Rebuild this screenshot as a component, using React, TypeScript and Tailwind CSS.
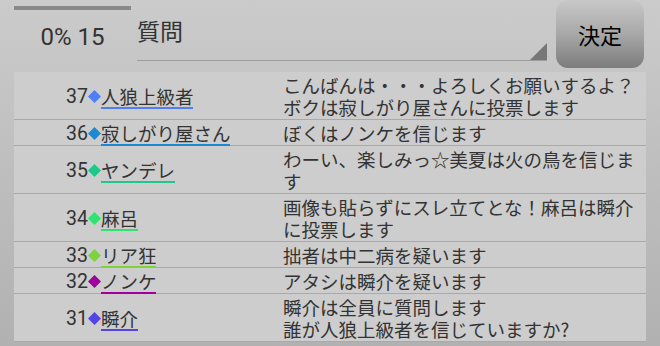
import React from "react";

type Row = { n: number; name: string; color: string; lines: string[] };

const rows: Row[] = [
  { n: 37, name: "人狼上級者", color: "#4f7ff2", lines: ["こんばんは・・・よろしくお願いするよ？", "ボクは寂しがり屋さんに投票します"] },
  { n: 36, name: "寂しがり屋さん", color: "#1a8ad4", lines: ["ぼくはノンケを信じます"] },
  { n: 35, name: "ヤンデレ", color: "#1ec88a", lines: ["わーい、楽しみっ☆美夏は火の鳥を信じま", "す"] },
  { n: 34, name: "麻呂", color: "#30e272", lines: ["画像も貼らずにスレ立てとな！麻呂は瞬介", "に投票します"] },
  { n: 33, name: "リア狂", color: "#7cd43a", lines: ["拙者は中二病を疑います"] },
  { n: 32, name: "ノンケ", color: "#a0009c", lines: ["アタシは瞬介を疑います"] },
  { n: 31, name: "瞬介", color: "#5544e4", lines: ["瞬介は全員に質問します", "誰が人狼上級者を信じていますか?"] },
];

const cjk = { fontFamily: '"Noto Sans CJK JP", sans-serif' };
const latin = { fontFamily: 'Roboto, "Noto Sans CJK JP", sans-serif' };

export default function App() {
  return (
    <div
      className="w-[660px] h-[346px] overflow-hidden bg-gradient-to-b from-[#cbcbcb] to-[#b1b1b1] px-[14px] text-[#333]"
      style={cjk}
    >
      <div className="flex h-[72px]">
        <div className="w-[117px] flex flex-col">
          <div className="mt-[6px] h-[4px] bg-[#8a8a8a]" />
          <div className="mt-[13px] text-center text-[24px] leading-[28px] text-[#333]" style={latin}>
            0% 15
          </div>
        </div>
        <div className="ml-[6px] w-[410px] h-[61px] relative border-b border-[#9c9c9c]">
          <div className="pt-[17px] text-[23px] leading-[26px] text-[#333]">質問</div>
          <svg className="absolute right-0 bottom-0" width="17" height="17" viewBox="0 0 17 17">
            <polygon points="17,0 17,17 0,17" fill="#777777" />
          </svg>
        </div>
        <div className="ml-[9px] w-[88px] h-[68px] rounded-[12px] bg-gradient-to-b from-[#c8c8c8] via-[#a8a8a8] to-[#7c7c7c] flex items-center justify-center text-[22px] leading-[26px] text-black">
          決定
        </div>
      </div>
      <div className="bg-[#cdcdcd]">
        {rows.map((r) => (
          <div key={r.n} className="flex border-b border-[#a9a9a9] pt-[2px] pb-[1px]">
            <div className="w-[269px] pl-[52px] flex items-center text-[18.5px] leading-[19px]">
              <span className="text-[19.5px]" style={latin}>{r.n}</span>
              <svg width="13" height="13" viewBox="0 0 13 13">
                <polygon points="6.5,0 13,6.5 6.5,13 0,6.5" fill={r.color} />
              </svg>
              <span className="border-b-2 pb-[1px] translate-y-[2px]" style={{ borderColor: r.color }}>
                {r.name}
              </span>
            </div>
            <div className="w-[360px] text-[18.5px] leading-[22px]">
              {r.lines.map((l, i) => (
                <div key={i} className="whitespace-nowrap">{l}</div>
              ))}
            </div>
          </div>
        ))}
      </div>
    </div>
  );
}
